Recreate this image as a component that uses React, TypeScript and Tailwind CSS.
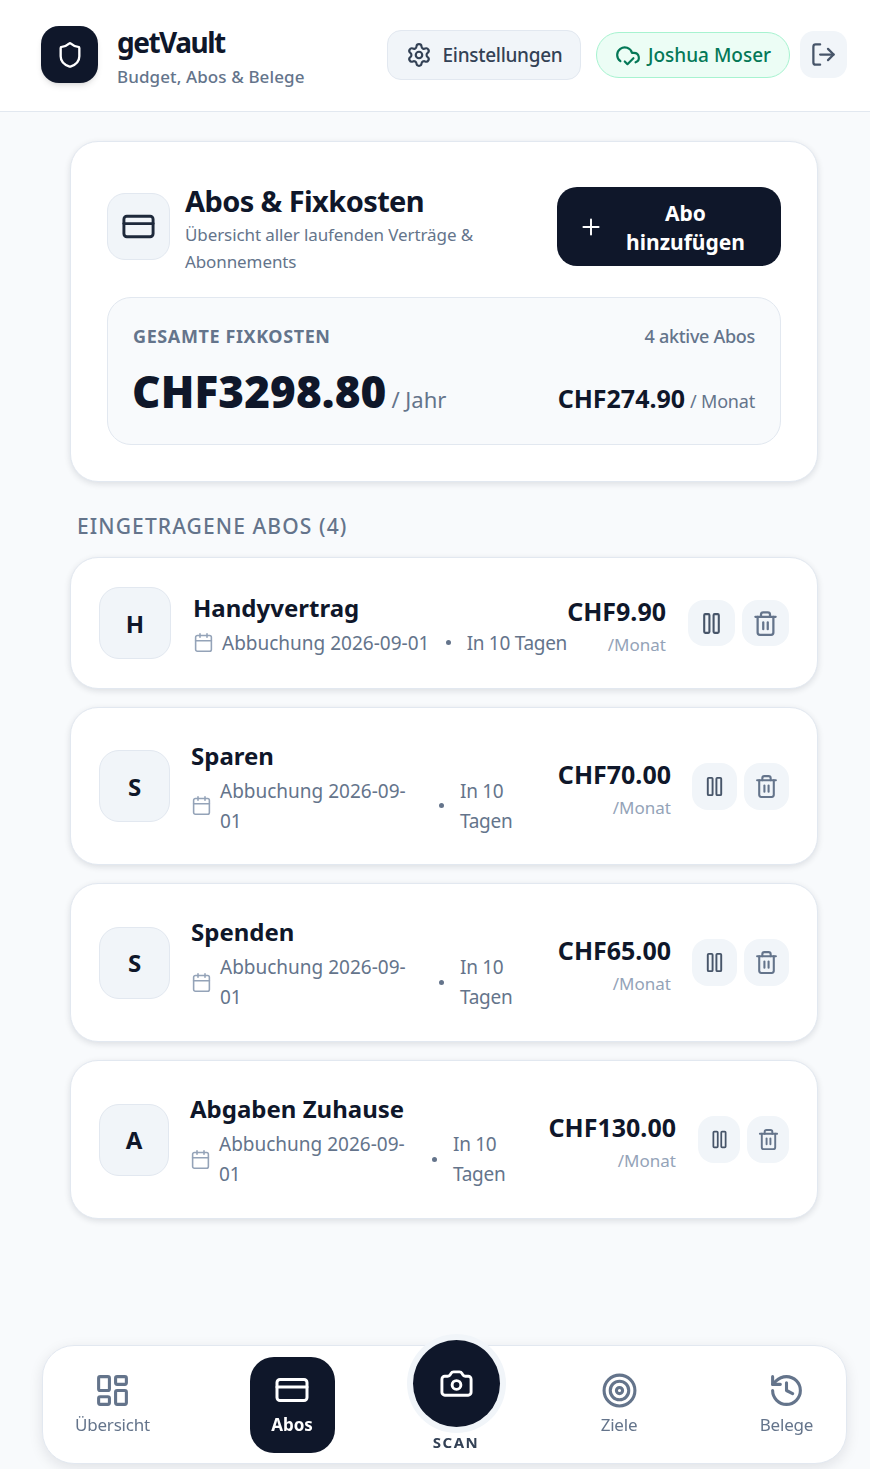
import {
  Calendar,
  Camera,
  CloudCheck,
  CreditCard,
  History,
  LayoutDashboard,
  LogOut,
  Pause,
  Plus,
  Settings,
  Shield,
  Target,
  Trash2,
} from "lucide-react";

type Abo = {
  letter: string;
  name: string;
  price: string;
  card: string;
  avatar: string;
  body: string;
  date: string;
  days: string;
  priceBox: string;
  btn: string;
  icon: number;
  btnGap: string;
};

const abos: Abo[] = [
  {
    letter: "H",
    name: "Handyvertrag",
    price: "CHF9.90",
    card: "h-[132px] mb-[18px]",
    avatar: "w-[72px] h-[72px]",
    body: "ml-[22px] w-[374px]",
    date: "w-[208px] whitespace-nowrap",
    days: "whitespace-nowrap",
    priceBox: "w-[99px]",
    btn: "w-[47px] h-[46px]",
    icon: 27,
    btnGap: "ml-[22px] gap-[7px]",
  },
  {
    letter: "S",
    name: "Sparen",
    price: "CHF70.00",
    card: "h-[158px] mb-[18px]",
    avatar: "w-[71px] h-[72px]",
    body: "ml-[21px] w-[366px]",
    date: "w-[203px]",
    days: "w-[70px]",
    priceBox: "w-[114px]",
    btn: "w-[45px] h-[47px]",
    icon: 25,
    btnGap: "ml-[21px] gap-[7px]",
  },
  {
    letter: "S",
    name: "Spenden",
    price: "CHF65.00",
    card: "h-[159px] mb-[18px]",
    avatar: "w-[71px] h-[72px]",
    body: "ml-[21px] w-[366px]",
    date: "w-[203px]",
    days: "w-[70px]",
    priceBox: "w-[114px]",
    btn: "w-[45px] h-[47px]",
    icon: 25,
    btnGap: "ml-[21px] gap-[7px]",
  },
  {
    letter: "A",
    name: "Abgaben Zuhause",
    price: "CHF130.00",
    card: "h-[159px]",
    avatar: "w-[70px] h-[72px]",
    body: "ml-[21px] w-[358px]",
    date: "w-[197px]",
    days: "w-[70px]",
    priceBox: "w-[128px]",
    btn: "w-[42px] h-[47px]",
    icon: 23,
    btnGap: "ml-[22px] gap-[7px]",
  },
];

function AboRow({ abo }: { abo: Abo }) {
  return (
    <div
      className={`flex items-center pl-[28px] bg-white border border-[#e2e8f0] rounded-[28px] shadow-[0_2px_6px_rgba(15,23,42,0.12)] ${abo.card}`}
    >
      <div
        className={`flex items-center justify-center shrink-0 pt-[1px] bg-[#f1f5f9] border border-[#e2e8f0] rounded-[20px] text-[24px] font-bold text-[#0f172a] ${abo.avatar}`}
      >
        {abo.letter}
      </div>
      <div className={`shrink-0 pt-[3px] ${abo.body}`}>
        <div className="text-[24px] leading-[32px] font-bold text-[#0f172a]">{abo.name}</div>
        <div className="flex items-center mt-[4px] text-[19px] leading-[30px] text-[#64748b]">
          <Calendar size={21} strokeWidth={1.8} className="shrink-0 mr-[8px] text-[#94a3b8]" />
          <span className={abo.date}>Abbuchung 2026-09-01</span>
          <span className="mx-[16px] w-[5px] h-[5px] shrink-0 rounded-full bg-[#64748b]" />
          <span className={`tracking-[-0.3px] ${abo.days}`}>In 10 Tagen</span>
        </div>
      </div>
      <div className={`shrink-0 text-right pt-[7px] ${abo.priceBox}`}>
        <div className="text-[25px] leading-[32px] font-bold whitespace-nowrap text-[#0f172a]">{abo.price}</div>
        <div className="mt-[4px] text-[17px] leading-[28px] text-[#94a3b8]">/Monat</div>
      </div>
      <div className={`flex shrink-0 ${abo.btnGap}`}>
        <button className={`flex items-center justify-center bg-[#f1f5f9] rounded-[16px] text-[#475569] ${abo.btn}`}>
          <Pause size={abo.icon - 2} strokeWidth={2} />
        </button>
        <button className={`flex items-center justify-center bg-[#f1f5f9] rounded-[16px] text-[#64748b] ${abo.btn}`}>
          <Trash2 size={abo.icon} strokeWidth={2} />
        </button>
      </div>
    </div>
  );
}

function NavItem({ icon, label }: { icon: React.ReactNode; label: string }) {
  return (
    <div className="flex flex-col items-center text-[#64748b]">
      {icon}
      <span className="mt-[3px] text-[17px] leading-[26px] tracking-[-0.2px]">{label}</span>
    </div>
  );
}

export default function App() {
  return (
    <div className="min-h-[1469px] bg-[#f8fafc] font-['Noto_Sans','Open_Sans',sans-serif]">
      <header className="flex items-center h-[112px] pb-[2px] pl-[41px] pr-[23px] bg-white border-b border-[#e2e8f0]">
        <div className="flex items-center justify-center w-[57px] h-[57px] rounded-[18px] bg-[#0f172a] text-white shadow-md">
          <Shield size={28} strokeWidth={2} />
        </div>
        <div className="ml-[19px] w-[270px] pt-[5px]">
          <div className="text-[28px] leading-[34px] font-bold text-[#0f172a] tracking-[-1.5px]">getVault</div>
          <div className="mt-[5px] text-[17px] leading-[26px] font-medium tracking-[0.1px] text-[#64748b]">Budget, Abos & Belege</div>
        </div>
        <button className="flex items-center justify-center gap-[11px] w-[194px] h-[50px] bg-[#f1f5f9] border border-[#e2e8f0] rounded-[14px] text-[19px] font-medium tracking-[-0.3px] text-[#334155]">
          <Settings size={26} strokeWidth={2} />
          <span className="pt-[2px]">Einstellungen</span>
        </button>
        <div className="flex items-center justify-center gap-[7px] ml-[15px] w-[194px] h-[46px] bg-[#ecfdf5] border border-[#a7f3d0] rounded-full text-[19px] font-medium text-[#047857]">
          <CloudCheck size={26} strokeWidth={2} />
          <span className="pt-[2px]">Joshua Moser</span>
        </div>
        <button className="flex items-center justify-center ml-[10px] w-[47px] h-[47px] bg-[#f1f5f9] rounded-[14px] text-[#475569]">
          <LogOut size={27} strokeWidth={2} />
        </button>
      </header>

      <main className="ml-[70px] w-[748px] pt-[29px]">
        <section className="h-[341px] pl-[36px] pr-[36px] pt-[45px] bg-white border border-[#e2e8f0] rounded-[28px] shadow-[0_2px_6px_rgba(15,23,42,0.12)]">
          <div className="flex items-start">
            <div className="flex items-center justify-center w-[63px] h-[67px] mt-[6px] bg-[#f1f5f9] border border-[#e2e8f0] rounded-[18px] text-[#1e293b]">
              <CreditCard size={35} strokeWidth={2} />
            </div>
            <div className="ml-[15px] w-[340px] -mt-[2px]">
              <div className="text-[29px] leading-[32px] font-bold tracking-[-0.6px] text-[#0f172a]">Abos & Fixkosten</div>
              <div className="mt-[4px] text-[17px] leading-[27px] tracking-[-0.1px] text-[#64748b]">
                Übersicht aller laufenden Verträge & Abonnements
              </div>
            </div>
            <button className="flex items-center ml-auto w-[224px] h-[79px] pl-[21px] pr-[24px] bg-[#0f172a] rounded-[20px] text-white">
              <Plus size={26} strokeWidth={1.8} className="shrink-0" />
              <span className="flex-1 text-center text-[21px] leading-[29px] font-bold pl-[10px] pt-[2px]">
                Abo
                <br />
                hinzufügen
              </span>
            </button>
          </div>
          <div className="mt-[22px] h-[148px] px-[25px] pt-[24px] bg-[#f8fafc] border border-[#e2e8f0] rounded-[24px]">
            <div className="flex items-center justify-between">
              <span className="text-[18px] leading-[28px] font-bold tracking-[0.6px] text-[#64748b]">
                GESAMTE FIXKOSTEN
              </span>
              <span className="text-[18px] leading-[28px] font-medium tracking-[-0.3px] text-[#64748b]">4 aktive Abos</span>
            </div>
            <div className="flex items-baseline justify-between mt-[14px]">
              <div className="-ml-[1px]">
                <span className="text-[44px] leading-[54px] font-black tracking-[0.1px] text-[#0f172a]">CHF3298.80</span>
                <span className="ml-[5px] text-[22px] text-[#64748b]">/ Jahr</span>
              </div>
              <div>
                <span className="text-[25px] font-bold text-[#0f172a]">CHF274.90</span>
                <span className="ml-[5px] text-[18px] tracking-[-0.2px] text-[#64748b]">/ Monat</span>
              </div>
            </div>
          </div>
        </section>

        <h2 className="ml-[7px] mt-[28px] mb-[15px] text-[21px] leading-[32px] font-medium tracking-[1.1px] text-[#64748b]">
          EINGETRAGENE ABOS (4)
        </h2>

        {abos.map((abo) => (
          <AboRow key={abo.name} abo={abo} />
        ))}
      </main>

      <nav className="fixed left-[42px] bottom-[5px] grid grid-cols-[139px_220px_108px_218px_117px] items-center justify-items-center w-[805px] h-[119px] bg-white border border-[#e2e8f0] rounded-[32px] shadow-[0_4px_14px_rgba(15,23,42,0.1)]">
        <NavItem icon={<LayoutDashboard size={37} strokeWidth={2} />} label="Übersicht" />
        <div className="flex flex-col items-center justify-center w-[85px] h-[96px] bg-[#0f172a] rounded-[24px] text-white">
          <CreditCard size={36} strokeWidth={2} />
          <span className="mt-[4px] text-[17px] leading-[26px] font-bold">Abos</span>
        </div>
        <div className="flex flex-col items-center -mt-[16px]">
          <div className="flex items-center justify-center w-[87px] h-[87px] rounded-full bg-[#0f172a] text-white ring-[6px] ring-[#f1f5f9]">
            <Camera size={35} strokeWidth={2} />
          </div>
          <span className="mt-[3px] text-[15px] leading-[24px] font-bold tracking-[1.5px] text-[#334155]">SCAN</span>
        </div>
        <NavItem icon={<Target size={37} strokeWidth={2} />} label="Ziele" />
        <NavItem icon={<History size={37} strokeWidth={2} />} label="Belege" />
      </nav>
    </div>
  );
}
